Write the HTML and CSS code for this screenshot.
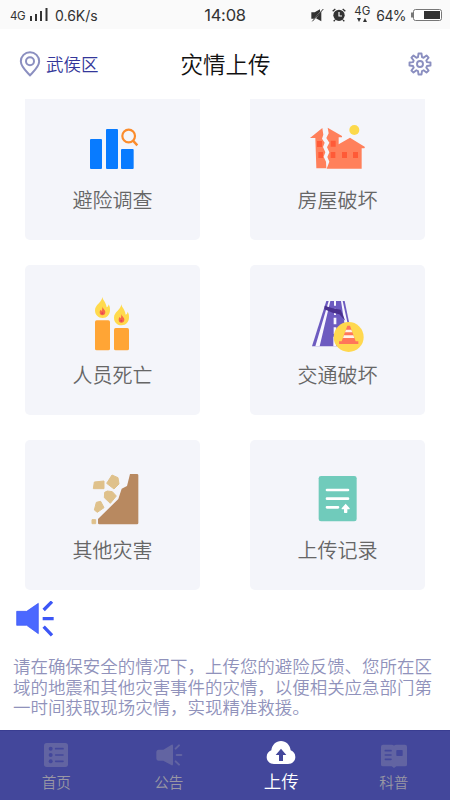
FILE: index.html
```html
<!DOCTYPE html>
<html lang="zh-CN">
<head>
<meta charset="utf-8">
<title>灾情上传</title>
<link rel="stylesheet" href="styles.css">
</head>
<body>
<div class="app">
  <div class="status">
    <div class="status-left">
      <span class="net">4G</span>
      <svg class="signal" width="18" height="13" viewBox="0 0 18 13" fill="#333"><path d="M0 8h2v5H0zM5 6h2v7H5zM10 3h2v10h-2zM15.500 0h2v13h-2z"/></svg>
      <span class="speed">0.6K/s</span>
    </div>
    <span class="clock">14:08</span>
    <div class="status-right">
      <svg class="mute" width="13" height="14" viewBox="0 0 39 42" fill="#333"><path d="M1 13h10L27 4v8L9 32H1z"/><path d="M31 10v30L15 31z"/><path d="M4 40L37 3" stroke="#333" stroke-width="3"/></svg>
      <svg class="alarm" width="14" height="14" viewBox="0 0 42 42"><circle cx="21" cy="22" r="17" fill="#333"/><path d="M2 10l8-7M40 10l-8-7M9 36l-4 4M33 36l4 4" stroke="#333" stroke-width="4"/><path d="M21 12v12h9" fill="none" stroke="#fafafa" stroke-width="3.500"/></svg>
      <span class="data"><b>4G</b><svg width="12" height="5" viewBox="0 0 12 5" fill="#333"><path d="M1 0h4L3 4zM7 4h4L9 0z"/></svg></span>
      <span class="percent">64%</span>
      <svg class="battery" width="31" height="14" viewBox="0 0 31 14"><rect x="2.500" y="1.500" width="28" height="11" rx="2" fill="#fff" stroke="#777"/><path d="M0 4.500h2v5H0z" fill="#777"/><path d="M13 3h16v8H13z" fill="#333"/></svg>
    </div>
  </div>

  <header class="header">
    <div class="place">
      <svg width="22" height="26" viewBox="0 0 66 78" fill="none" stroke="#8b8fc0"><path d="M33 73C23 62 5.500 48 5.500 31a27.500 27.500 0 0 1 55 0C60.500 48 43 62 33 73z" stroke-width="6"/><circle cx="33" cy="31" r="12" stroke-width="6"/></svg>
      <span>武侯区</span>
    </div>
    <h1 class="title">灾情上传</h1>
    <svg class="gear" width="24" height="24" viewBox="0 0 24 24" fill="none" stroke="#8b8fc0" stroke-width="1.900" stroke-linejoin="round"><path d="M10.500 1.500h3l.5 3.600 1.600.7 2.900-2.300 2.100 2.100-2.300 2.900.7 1.600 3.500.4v3l-3.500.5-.7 1.600 2.300 2.900-2.100 2.100-2.900-2.300-1.600.7-.5 3.500h-3l-.5-3.500-1.600-.7-2.900 2.300-2.100-2.100 2.300-2.900-.7-1.600-3.500-.5v-3l3.500-.4.7-1.600-2.300-2.900 2.100-2.100 2.900 2.300 1.600-.7z"/><circle cx="12" cy="12" r="3"/></svg>
  </header>

  <main class="cards">
    <div class="card">
      <svg class="art" viewBox="-135 0 525 210"><g fill="#087bff"><rect x="60" y="87" width="36" height="90" rx="3"/><rect x="108" y="57" width="36" height="120" rx="3"/><rect x="153" y="117" width="38" height="60" rx="3"/></g><g fill="none" stroke="#fb8c2c" stroke-width="6.500"><circle cx="176" cy="78" r="19"/><path d="M189 92l13 14" stroke-width="7"/></g></svg>
      <span class="label">避险调查</span>
    </div>
    <div class="card">
      <svg class="art" viewBox="-120 0 525 210"><circle cx="193" cy="60" r="15" fill="#fcd94b"/><path d="M60 84L97 54l3 20-4 12 8 12-5 13 7 16-5 13 7 15 1 20H79L76 84zM113 53l43 25v4h-10v21l34-20 45 28-2 4h-8v61H110l8-21-6-14 6-14-7-15 7-14-9-14 7-14z" fill="#ff805b"/><g fill="#ff5a37"><path d="M81 93h15v18H81zM122 92h15v18h-15zM85 126h14v18H85zM122 126h14v18h-14zM156 126h15v18h-15zM189 126h15v18h-15z"/></g></svg>
      <span class="label">房屋破坏</span>
    </div>
    <div class="card">
      <svg class="art" viewBox="-135 0 525 210"><g fill="#ffa535"><rect x="75" y="106" width="45" height="90" rx="5"/><rect x="132" y="129" width="45" height="67" rx="5"/></g><g id="flame"><path d="M97 36c1 9 11 15 13 31 4-1 5-5 6-9 4 7 4 12 4 17 0 14-9 24-22 24S75 90 75 76c0-17 20-23 22-40z" fill="#ffda4d"/><path d="M97 64c1 8 9 10 9 18 0 6-4 9-9 9s-8-4-8-9c0-4 2-6 3-8l3 4c2-4 2-8 2-14z" fill="#f7684b"/><circle cx="97" cy="85" r="3" fill="#e54258"/></g><use href="#flame" x="57" y="22"/></svg>
      <span class="label">人员死亡</span>
    </div>
    <div class="card">
      <svg class="art" viewBox="-120 0 525 210"><path d="M109 48h55l28 136H66z" fill="#6d5bc0"/><path d="M116 48h5L89 184H76zM153 48h5l30 136h-14zM132 48h6v14h-6zM132 71h6v19h-6zM131 98h8v20h-8zM131 127h8v20h-8zM130 155h9v29h-9z" fill="#f8f7ff"/><path d="M104 62l24 8 24 4 14 34-18-20-20-5-25-10z" fill="#49308e"/><circle cx="176" cy="156" r="45" fill="#ffd84f"/><path d="M172 122h8l17 47h8v8h-58v-8h8z" fill="#ff765a"/><path d="M168 134h16l3 8h-22zM162 151h28l3 8h-34z" fill="#fff4e8"/></svg>
      <span class="label">交通破坏</span>
    </div>
    <div class="card">
      <svg class="art" viewBox="-135 0 525 210"><path d="M180 42h21q4 0 4 4v143q0 4-4 4H88q-4 0-4-4v-12l61-60 10-31 16-8z" fill="#b88960"/><g fill="#dfc18b" stroke="#dfc18b" stroke-width="3" stroke-linejoin="round"><path d="M73 66l29-3v23H70zM126 45l18 8 3 19-15 15-22-17zM104 97l8-4 15 2 12 13-18 22-18-17zM79 127l13-3 10 19-20 14-9-7z"/><rect x="66" y="179" width="11" height="12"/></g></svg>
      <span class="label">其他灾害</span>
    </div>
    <div class="card">
      <svg class="art" viewBox="-120 0 525 210"><rect x="86" y="48" width="114" height="136" rx="7" fill="#70cbbb"/><path d="M111 90h63M111 116h63M111 142h33" stroke="#fff" stroke-width="8" stroke-linecap="round"/><path d="M167 131l12 14q1 3-2 3h-5v9q0 2-2 2h-6q-2 0-2-2v-9h-5q-3 0-2-3z" fill="#fff"/></svg>
      <span class="label">上传记录</span>
    </div>
  </main>

  <section class="notice">
    <svg class="horn" width="38" height="36" viewBox="0 0 114 108"><path d="M2 31h30l35-24v91L32 73H2z" fill="#4b68ff" stroke="#3651f4" stroke-width="2"/><path d="M83 26l25-25M80 52h33M83 76l25 26" transform="translate(0 1)" stroke="#3c56f6" stroke-width="10"/></svg>
    <p class="tip">请在确保安全的情况下，上传您的避险反馈、您所在区<br>域的地震和其他灾害事件的灾情，以便相关应急部门第<br>一时间获取现场灾情，实现精准救援。</p>
  </section>

  <nav class="tabs">
    <div class="tab">
      <svg width="30" height="30" viewBox="0 0 90 90"><rect x="9" y="12" width="72" height="72" rx="8" fill="#6264a2"/><g fill="#43479b"><circle cx="29" cy="29" r="6"/><circle cx="29" cy="48" r="6"/><circle cx="29" cy="67" r="6"/></g><path d="M44 29h22M44 48h22M44 67h22" stroke="#43479b" stroke-width="5" stroke-linecap="round"/></svg>
      <span>首页</span>
    </div>
    <div class="tab">
      <svg width="30" height="30" viewBox="0 0 90 90"><path d="M14 32h14l25-15q4-1 4 3v56q0 4-4 3L28 65H14q-7 0-7-8V40q0-8 7-8z" fill="#6264a2"/><path d="M65 29l10-10M68 48h14M65 67l10 10" stroke="#6264a2" stroke-width="6" stroke-linecap="round"/></svg>
      <span>公告</span>
    </div>
    <div class="tab active">
      <svg width="30" height="30" viewBox="0 0 90 90"><path d="M24 75C10 75 2 65 2 54c0-10 6-17 14-20C18 17 30 6 45 6s27 11 29 28c8 3 14 10 14 20 0 11-8 21-22 21z" fill="#fff"/><path d="M45 29l16 19H51v18H39V48H29z" fill="#43479b"/></svg>
      <span>上传</span>
    </div>
    <div class="tab">
      <svg width="30" height="30" viewBox="0 0 90 90"><path d="M12 17h26q5 0 7 3 2-3 7-3h26q6 0 6 6v54q0 5-6 5H52l-7 5-7-5H12q-6 0-6-5V23q0-6 6-6z" fill="#6264a2"/><path d="M19 35h17M19 48h17M19 61h17" stroke="#43479b" stroke-width="5" stroke-linecap="round"/><rect x="52" y="33" width="19" height="18" rx="2" fill="#43479b"/></svg>
      <span>科普</span>
    </div>
  </nav>
</div>
</body>
</html>
```
FILE: styles.css
```css
* { box-sizing: border-box; }
body {
  margin: 0;
  background: #fff;
  font-family: Roboto, "Noto Sans CJK SC", sans-serif;
  font-weight: 350;
}
svg { display: block; flex: none; }
.app {
  width: 450px;
  height: 800px;
  display: flex;
  flex-direction: column;
  overflow: hidden;
}
.status {
  height: 29px;
  flex: none;
  display: grid;
  grid-template-columns: 1fr auto 1fr;
  align-items: center;
  padding: 1px 8px 0 10px;
  background: #fafafa;
  color: #333;
  font-family: Inter, sans-serif;
  font-weight: 400;
}
.status-left, .status-right { display: flex; align-items: center; }
.status-right { justify-content: flex-end; }
.net { font-size: 11.5px; width: 20px; letter-spacing: -0.5px; padding-top: 2px; }
.signal { margin-top: -1px; }
.speed { font-size: 14px; margin-left: 7px; }
.clock { font-size: 16.5px; letter-spacing: -0.2px; margin-right: 2px; }
.alarm { margin-left: 8px; }
.data { margin-left: 8px; width: 16px; display: flex; flex-direction: column; align-items: center; margin-top: -2px; }
.data b { font-size: 11.5px; font-weight: 400; line-height: 13px; }
.percent { font-size: 14px; letter-spacing: -0.6px; margin: 0 5px 0 6px; }
.header {
  height: 70px;
  flex: none;
  display: grid;
  grid-template-columns: 1fr auto 1fr;
  align-items: center;
  padding: 0 18px 0 19px;
}
.place { display: flex; align-items: center; gap: 5px; color: #34379a; font-size: 17.5px; }
.place span { margin-top: -2px; }
.title { margin: 2px 0 0; font-size: 22.5px; line-height: 30px; font-weight: 350; color: #111; }
.gear { justify-self: end; }
.cards {
  height: 492px;
  flex: none;
  overflow: hidden;
  display: grid;
  grid-template-columns: 175px 175px;
  grid-auto-rows: 150px;
  gap: 25px 50px;
  align-content: end;
  justify-content: center;
  padding-bottom: 0.6px;
}
.card {
  border-radius: 5px;
  background: #f4f5fa;
  display: flex;
  flex-direction: column;
  align-items: center;
  padding-top: 19.5px;
}
.art { width: 175px; height: 70px; }
.label { margin-top: 6.5px; font-size: 20px; line-height: 30px; color: #666; }
.notice {
  flex: 1;
  padding: 10px 13px 0;
}
.horn { margin-left: 3px; }
.tip {
  margin: 20px 0 0;
  font-size: 17.47px;
  line-height: 20.5px;
  color: #9092bb;
  white-space: nowrap;
}
.tabs {
  height: 70px;
  flex: none;
  display: grid;
  grid-template-columns: repeat(4, 1fr);
  background: #43479b;
  border-top: 1px solid #393d91;
}
.tab {
  display: flex;
  flex-direction: column;
  align-items: center;
  padding-top: 8px;
  font-size: 14.6px;
  line-height: 20px;
  color: #9997a4;
}
.tab span { margin-top: 4px; }
.active { color: #fff; font-size: 17.5px; }
.active span { margin-top: 3px; }
```
